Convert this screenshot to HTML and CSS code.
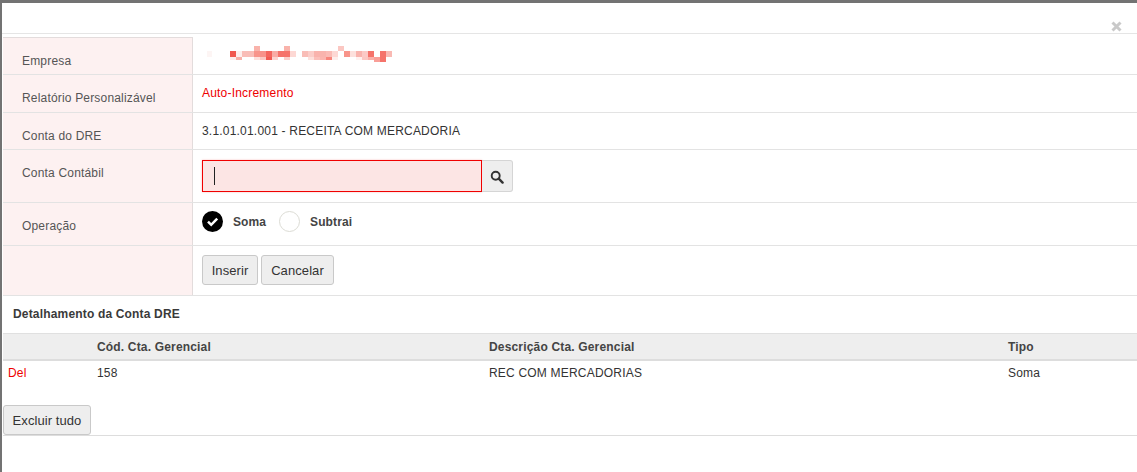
FILE: index.html
```html
<!DOCTYPE html>
<html lang="pt-BR">
<head>
<meta charset="utf-8">
<title>Detalhamento da Conta DRE</title>
<link rel="stylesheet" href="styles.css">
</head>
<body>
<div class="modal">
  <div class="modal-header">
    <svg class="close" width="11" height="11" viewBox="0 0 11 11" aria-label="Fechar">
      <path d="M1.5 1.5 L9.5 9.5 M9.5 1.5 L1.5 9.5" stroke="#c9c9c9" stroke-width="3"/>
    </svg>
  </div>
  <div class="form">
    <div class="row row-empresa">
      <div class="label">Empresa</div>
      <div class="value">
        <svg class="blur" width="190" height="18" viewBox="0 0 190 18" aria-hidden="true">
          <rect x="0" y="6" width="5" height="6" fill="#fdf5f4"/>
          <rect x="23" y="6" width="6" height="6" fill="#f0584f"/><rect x="23" y="12" width="6" height="3" fill="#fdeeec"/>
          <rect x="29" y="6" width="6" height="6" fill="#fdeeec"/><rect x="29" y="12" width="6" height="3" fill="#f8b0a8"/>
          <rect x="35" y="6" width="12" height="6" fill="#f9bdb7"/>
          <rect x="47" y="1" width="6" height="5" fill="#f9b3ab"/><rect x="47" y="6" width="6" height="6" fill="#f8948a"/><rect x="47" y="12" width="6" height="3" fill="#fde0dc"/>
          <rect x="53" y="6" width="6" height="6" fill="#f8928a"/><rect x="53" y="12" width="6" height="3" fill="#fbc9c4"/>
          <rect x="59" y="6" width="6" height="6" fill="#f4665e"/><rect x="59" y="12" width="6" height="3" fill="#f25a52"/>
          <rect x="65" y="6" width="6" height="6" fill="#f9aca5"/><rect x="65" y="12" width="6" height="3" fill="#fcd4d0"/>
          <rect x="71" y="6" width="6" height="6" fill="#f5736b"/>
          <rect x="77" y="1" width="6" height="5" fill="#f9b3ab"/><rect x="77" y="6" width="6" height="6" fill="#f5736b"/><rect x="77" y="12" width="6" height="3" fill="#fbd0cc"/>
          <rect x="83" y="6" width="6" height="6" fill="#fdd8d4"/>
          <rect x="95" y="6" width="6" height="6" fill="#f9bdb7"/>
          <rect x="101" y="6" width="6" height="6" fill="#fbcdc9"/><rect x="101" y="12" width="6" height="3" fill="#fde0dc"/>
          <rect x="107" y="6" width="6" height="6" fill="#f9b3ad"/><rect x="107" y="12" width="6" height="3" fill="#fbbfba"/>
          <rect x="113" y="6" width="6" height="6" fill="#f9b3ad"/><rect x="113" y="12" width="6" height="3" fill="#fbb5af"/>
          <rect x="119" y="6" width="6" height="6" fill="#fabbb5"/><rect x="119" y="12" width="6" height="3" fill="#f8857c"/>
          <rect x="125" y="6" width="6" height="6" fill="#fdd8d4"/><rect x="125" y="12" width="6" height="3" fill="#fdeeec"/>
          <rect x="131" y="1" width="6" height="5" fill="#fbc7c2"/>
          <rect x="137" y="6" width="6" height="6" fill="#f8948a"/>
          <rect x="143" y="6" width="6" height="6" fill="#fde0dc"/>
          <rect x="149" y="6" width="6" height="6" fill="#f9b3ad"/><rect x="149" y="12" width="6" height="3" fill="#fff0ee"/>
          <rect x="155" y="6" width="6" height="6" fill="#fcc9c5"/><rect x="155" y="12" width="6" height="3" fill="#fcc7c2"/>
          <rect x="161" y="6" width="6" height="6" fill="#f5736b"/><rect x="161" y="12" width="6" height="3" fill="#fbb0a9"/>
          <rect x="167" y="12" width="6" height="5" fill="#f99f98"/>
          <rect x="173" y="6" width="6" height="11" fill="#f5736b"/>
          <rect x="179" y="6" width="6" height="6" fill="#f9b9b3"/>
        </svg>
      </div>
    </div>
    <div class="row row-text">
      <div class="label">Relatório Personalizável</div>
      <div class="value auto">Auto-Incremento</div>
    </div>
    <div class="row row-text row-dre">
      <div class="label">Conta do DRE</div>
      <div class="value">3.1.01.01.001 - RECEITA COM MERCADORIA</div>
    </div>
    <div class="row row-input">
      <div class="label">Conta Contábil</div>
      <div class="value">
        <div class="search">
          <div class="search-input"><span class="caret"></span></div>
          <button class="search-btn" type="button" aria-label="Buscar">
            <svg width="14" height="14" viewBox="0 0 14 14" aria-hidden="true">
              <circle cx="5.7" cy="5.7" r="4" fill="none" stroke="#333" stroke-width="1.9"/>
              <path d="M8.7 8.7 L12.6 12.6" stroke="#333" stroke-width="2.4" stroke-linecap="round"/>
            </svg>
          </button>
        </div>
      </div>
    </div>
    <div class="row row-radio">
      <div class="label">Operação</div>
      <div class="value radios">
        <span class="radio radio-on">
          <svg width="21" height="21" viewBox="0 0 21 21" aria-hidden="true">
            <path d="M6 10.6 L9.2 13.8 L15.2 7.6" fill="none" stroke="#fff" stroke-width="2.5"/>
          </svg>
        </span>
        <span class="radio-text">Soma</span>
        <span class="radio"></span>
        <span class="radio-text">Subtrai</span>
      </div>
    </div>
    <div class="row row-actions">
      <div class="label"></div>
      <div class="value actions">
        <button class="btn btn-insert" type="button">Inserir</button>
        <button class="btn btn-cancel" type="button">Cancelar</button>
      </div>
    </div>
  </div>
  <h2 class="section-title">Detalhamento da Conta DRE</h2>
  <div class="table">
    <div class="tr th">
      <span></span><span>Cód. Cta. Gerencial</span><span>Descrição Cta. Gerencial</span><span>Tipo</span>
    </div>
    <div class="tr td">
      <a class="del">Del</a><span>158</span><span>REC COM MERCADORIAS</span><span>Soma</span>
    </div>
  </div>
  <div class="footer">
    <button class="btn btn-clear" type="button">Excluir tudo</button>
  </div>
</div>
</body>
</html>
```
FILE: styles.css
```css
* { box-sizing: border-box; }
html, body { height: 100%; }
body {
  margin: 0;
  padding: 3px 0 0 2px;
  background: #737373;
  font-family: "Liberation Sans", Arial, sans-serif;
  font-size: 12px;
  color: #333;
  overflow: hidden;
}
.modal {
  height: 469px;
  background: #fff;
}
.modal-header {
  height: 31px;
  border-bottom: 1px solid #e5e5e5;
  display: flex;
  justify-content: flex-end;
  align-items: flex-end;
  padding-right: 15px;
}
.close { display: block; margin-bottom: 1px; }
.form { margin: 3px 0 0 1px; }
.row {
  display: grid;
  grid-template-columns: 190px 1fr;
  border-bottom: 1px solid #e3e3e3;
}
.row-empresa { height: 38px; }
.row-empresa .label { border-top: 1px solid #e3dcdc; }
.row-text { height: 38px; }
.row-dre { height: 37px; }
.row-input { height: 53px; }
.row-radio { height: 43px; }
.row-actions { height: 50px; }
.label {
  background: #fdf1f1;
  border-right: 1px solid #e3dcdc;
  padding: 16px 0 0 19px;
  line-height: 15px;
  letter-spacing: .18px;
  color: #555;
}
.value {
  padding: 10px 9px;
  line-height: 15px;
  letter-spacing: .2px;
  color: #333;
}
.row-text .value { padding-top: 11px; }
.auto { color: #ee0000; }
.blur { display: block; margin: -2px 0 0 5px; }
.search { display: flex; }
.search-input {
  width: 280px;
  height: 32px;
  background: #fce5e4;
  border: 1px solid #f00000;
  box-shadow: 0 0 2px rgba(230, 0, 0, .25);
  padding: 6px 11px;
}
.caret { display: block; width: 1px; height: 18px; background: #222; }
.search-btn {
  width: 31px;
  height: 32px;
  padding: 2px 0 0;
  background: #eee;
  border: 1px solid #d5d5d5;
  border-left: 0;
  border-radius: 0 3px 3px 0;
  display: flex;
  align-items: center;
  justify-content: center;
}
.radios { display: flex; align-items: center; padding-top: 8px; padding-bottom: 0; align-self: start; }
.radio {
  width: 21px;
  height: 21px;
  border-radius: 50%;
  border: 1px solid #dcdcd5;
  background: #fff;
}
.radio-on { border: 0; background: #000; }
.radio svg { display: block; }
.radio-text { font-weight: bold; color: #444; letter-spacing: .1px; margin: 2px 13px 0 10px; }
.actions { display: flex; gap: 3px; padding-top: 9px; }
.btn {
  height: 30px;
  padding: 0;
  background: #eee;
  border: 1px solid #c9c9c9;
  border-radius: 3px;
  font: 13px "Liberation Sans", Arial, sans-serif;
  letter-spacing: .08px;
  color: #333;
}
.btn-insert { width: 56px; }
.btn-cancel { width: 73px; }
.section-title {
  margin: 0 0 0 1px;
  height: 37px;
  padding: 11px 0 0 10px;
  font-size: 12px;
  line-height: 15px;
  letter-spacing: .17px;
  color: #3a3a3a;
}
.table { margin-left: 1px; }
.tr {
  display: grid;
  grid-template-columns: 89px 392px 519px 1fr;
  padding-left: 5px;
}
.th {
  height: 28px;
  align-items: center;
  background: #eee;
  border-top: 1px solid #e0e0e0;
  border-bottom: 2px solid #ddd;
  font-weight: bold;
  letter-spacing: .17px;
  color: #444;
}
.td { padding-top: 5px; line-height: 15px; letter-spacing: .2px; }
.del { color: #ee0000; }
.footer {
  margin: 24px 0 0 1px;
  border-bottom: 1px solid #ddd;
  height: 31px;
}
.btn-clear { display: block; width: 88px; }
```
